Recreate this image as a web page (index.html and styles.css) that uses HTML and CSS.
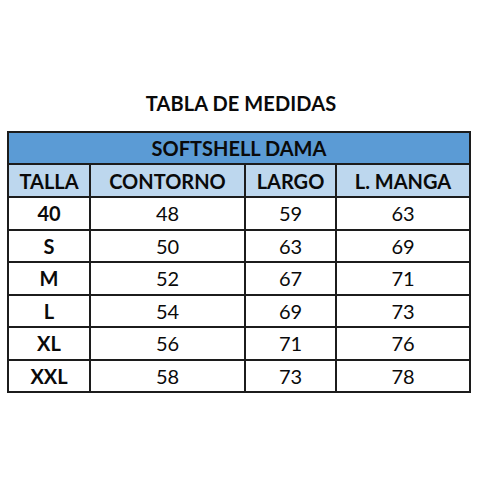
FILE: index.html
```html
<!DOCTYPE html>
<html lang="es">
<head>
<meta charset="utf-8">
<title>Tabla de medidas</title>
<link rel="stylesheet" href="styles.css">
</head>
<body>
<main class="page">
  <h1 class="title">TABLA DE MEDIDAS</h1>
  <table class="sizes">
    <colgroup>
      <col class="c1"><col class="c2"><col class="c3"><col class="c4">
    </colgroup>
    <thead>
      <tr class="band"><th colspan="4">SOFTSHELL DAMA</th></tr>
      <tr class="heads"><th>TALLA</th><th>CONTORNO</th><th>LARGO</th><th>L. MANGA</th></tr>
    </thead>
    <tbody>
      <tr><th>40</th><td>48</td><td>59</td><td>63</td></tr>
      <tr><th>S</th><td>50</td><td>63</td><td>69</td></tr>
      <tr><th>M</th><td>52</td><td>67</td><td>71</td></tr>
      <tr><th>L</th><td>54</td><td>69</td><td>73</td></tr>
      <tr><th>XL</th><td>56</td><td>71</td><td>76</td></tr>
      <tr><th>XXL</th><td>58</td><td>73</td><td>78</td></tr>
    </tbody>
  </table>
</main>
</body>
</html>
```
FILE: styles.css
```css
html, body {
  margin: 0;
  padding: 0;
  background: #ffffff;
}
body {
  font-family: "Lato", "Open Sans", "Liberation Sans", sans-serif;
  color: #0a0a0a;
}
.page {
  width: 480px;
  height: 480px;
  display: flex;
  flex-direction: column;
  align-items: center;
  padding-top: 91px;
  box-sizing: border-box;
}
.title {
  margin: 0 0 0 2px;
  font-size: 20px;
  font-weight: 700;
  line-height: 24px;
  letter-spacing: 0.1px;
}
.sizes {
  margin-top: 16px;
  margin-left: -2px;
  border-collapse: collapse;
  table-layout: fixed;
  width: 462px;
  border: 2px solid #1c1c1c;
  font-size: 20px;
}
.c1 { width: 82px; }
.c2 { width: 155px; }
.c3 { width: 91px; }
.c4 { width: 134px; }
.sizes th, .sizes td {
  border: 2px solid #1c1c1c;
  text-align: center;
  padding: 0;
  height: 30.5px;
  line-height: 24px;
}
.band th {
  background: #5b9bd5;
  font-weight: 700;
  height: 30px;
  border-bottom-width: 1px;
}
.heads th {
  background: #bdd7ee;
  font-weight: 700;
  height: 31px;
}
tbody th {
  font-weight: 700;
  padding-left: 2px;
}
tbody td {
  font-weight: 400;
}
```
